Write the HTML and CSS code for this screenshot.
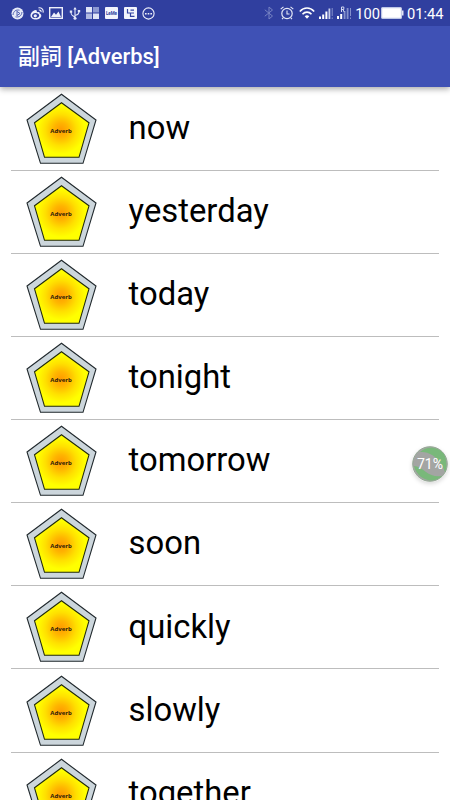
FILE: index.html
```html
<!DOCTYPE html>
<html lang="zh-Hant">
<head>
<meta charset="utf-8">
<title>副詞 [Adverbs]</title>
<link rel="stylesheet" href="styles.css">
</head>
<body>
<svg class="defs" width="0" height="0" aria-hidden="true">
  <defs>
    <radialGradient id="glow" gradientUnits="userSpaceOnUse" cx="36" cy="38" r="24">
      <stop offset="0" stop-color="#ff9a00"/>
      <stop offset=".3" stop-color="#ffb400"/>
      <stop offset=".65" stop-color="#ffe000"/>
      <stop offset="1" stop-color="#ffff00"/>
    </radialGradient>
    <symbol id="badge" viewBox="0 0 72 74">
      <path d="M36.5 2.3 71 28 58 71.3H15.5L2 28Z" fill="#ccd6dc" stroke="#20282c" stroke-width="1.1"/>
      <path d="M36.5 10.8 64 30.8 54 65.3H19.5L9.5 30.8Z" fill="url(#glow)" stroke="#20280c" stroke-width="1.1"/>
    </symbol>
  </defs>
</svg>
<div class="screen">
  <header class="top">
    <div class="status">
      <div class="group left">
        <svg width="13" height="13" viewBox="0 0 13 13"><circle cx="6.5" cy="6.5" r="6" fill="#e6eaf8"/><path d="M2 8C2.500 4 5 2.500 8.500 3.200M11 5C10.500 9 8 10.500 4.500 9.800M6 4V9M6 4.500 9 6.500 6 8.500" fill="none" stroke="#5362b2" stroke-width="1"/></svg>
        <svg width="14" height="13" viewBox="0 0 14 13"><path fill-rule="evenodd" d="M5.500 3C3 3.500.5 6 .5 8.500c0 2.500 2.500 4 5.200 4 3 0 5.600-1.700 5.600-3.800 0-1.200-.8-1.900-1.700-2.200.4-1.500-.8-2-2.800-1.200C7.200 3.800 6.800 3 5.500 3ZM5.500 6c2.200 0 3.700 1 3.700 2.500S7.700 11.100 5.500 11.100 2 10.200 2 8.700 3.500 6 5.500 6Z" fill="#eef0fa"/><circle cx="5.300" cy="8.800" r="1.600" fill="#eef0fa"/><path d="M8.500.9C11.500.3 13.800 2.700 13 5.600M8.800 3C10.300 2.700 11.400 3.900 11 5.200" fill="none" stroke="#eef0fa" stroke-width="1.100"/></svg>
        <svg width="14" height="12" viewBox="0 0 14 12"><rect x=".7" y=".7" width="12.600" height="10.600" fill="none" stroke="#eef0fa" stroke-width="1.400"/><path d="M2 10 5 5.500 7 7.700 9.500 4.500 12 10Z" fill="#eef0fa"/></svg>
        <svg width="12" height="13" viewBox="0 0 12 13"><path d="M6 1V11M6 10C3 9 2 8 2 4.500M6 8.500C9 7.500 10 7 10 4" fill="none" stroke="#e3e7f7" stroke-width="1.100"/><path d="M4.300 2.500 6 0 7.700 2.500ZM.8 3.500H3.200V5.700H.8ZM8.800 3H11.200V5.200H8.800Z" fill="#e3e7f7"/><circle cx="6" cy="11.200" r="1.500" fill="#e3e7f7"/></svg>
        <svg width="13" height="12" viewBox="0 0 13 12"><path d="M0 0H6V5.500H0ZM7 6.500H13V12H7Z" fill="#e0e5f6"/><path d="M7 0H13V5.500H7Z" fill="#8c99d2"/><path d="M0 6.500H6V12H0Z" fill="#b1bae2"/></svg>
        <svg width="13" height="12" viewBox="0 0 13 12"><rect width="13" height="12" rx="1" fill="#f2f4fc"/><text class="lemo" x="6.500" y="7.900" text-anchor="middle" textLength="11">LeMe</text></svg>
        <svg width="13" height="12" viewBox="0 0 13 12"><rect width="13" height="12" rx="1" fill="#f2f4fc"/><path d="M3.500 2V6H10M6.500 6V9.400H10.500M6.500 3.200H10" fill="none" stroke="#3344a2" stroke-width="1.200"/></svg>
        <svg width="13" height="13" viewBox="0 0 13 13"><circle cx="6.500" cy="6.500" r="5.600" fill="none" stroke="#eef0fa" stroke-width="1.100"/><path d="M3 6H4.600V7.500H3ZM5.700 6H7.300V7.500H5.700ZM8.400 6H10V7.500H8.400Z" fill="#eef0fa"/></svg>
      </div>
      <div class="group right">
        <svg width="10" height="14" viewBox="0 0 10 14"><path d="M.8 3.800 8.500 10 5 13V1L8.500 4 .8 10.200" fill="none" stroke="#7783c3" stroke-width="1"/></svg>
        <svg class="alarm" width="14" height="14" viewBox="0 0 14 14"><circle cx="7" cy="7.500" r="5.200" fill="none" stroke="#e6e9f7" stroke-width="1.200"/><path d="M.7 3.200 3.500.8M13.300 3.200 10.500.8M7 4.500V8H9.500M3.200 11.800 2 13.200M10.800 11.800 12 13.200" fill="none" stroke="#e6e9f7" stroke-width="1.100"/></svg>
        <svg class="wifi" width="16" height="12" viewBox="0 0 16 12"><path d="M.8 4.500C5-.1 11-.1 15.200 4.500M3.500 7.200C6 4.400 10 4.400 12.500 7.200" fill="none" stroke="#fff" stroke-width="1.600"/><path d="M5.700 9.200Q8 7.400 10.300 9.200L8 11.700Z" fill="#fff"/></svg>
        <svg class="signal" width="14" height="13" viewBox="0 0 14 13"><path d="M0 9.500H2V12H0ZM3.200 7.500H5.200V12H3.200ZM6.400 4.500H8.400V12H6.400Z" fill="#fff"/><path d="M9.500 1.500H11.300V12H9.500Z" fill="#c8cfed"/><path d="M12.700 1H13.700V9H12.700ZM12.700 10.500H13.700V12H12.700Z" fill="#8490cb"/></svg>
        <svg class="signal" width="15" height="14" viewBox="0 0 15 14"><path d="M0 10H2V13H0ZM3.200 8H5.200V13H3.200Z" fill="#fff"/><path d="M6.700 5H8.500V13H6.700ZM9.700 2H11.500V13H9.700ZM13 2H14V10H13ZM13 11.500H14V13H13Z" fill="#8490cb"/><path d="M4.500 6V1H6.800V3.500H4.500M6 3.500 7.200 6" fill="none" stroke="#d2d8f0"/></svg>
        <span class="level">100</span>
        <svg class="battery" width="23" height="12" viewBox="0 0 23 12"><rect x=".6" y=".6" width="19.800" height="10.800" rx="1" fill="#fff" stroke="#bec7e5" stroke-width="1.200"/><path d="M21 3.500H22.500V8.500H21Z" fill="#dfe4f5"/></svg>
        <span class="clock">01:44</span>
      </div>
    </div>
    <h1 class="title">副詞 [Adverbs]</h1>
  </header>
  <main>
    <ul class="list">
      <li class="row"><svg class="badge" viewBox="0 0 72 74"><use href="#badge"/><text x="36" y="41">Adverb</text></svg><span class="word">now</span></li>
      <li class="row"><svg class="badge" viewBox="0 0 72 74"><use href="#badge"/><text x="36" y="41">Adverb</text></svg><span class="word">yesterday</span></li>
      <li class="row"><svg class="badge" viewBox="0 0 72 74"><use href="#badge"/><text x="36" y="41">Adverb</text></svg><span class="word">today</span></li>
      <li class="row"><svg class="badge" viewBox="0 0 72 74"><use href="#badge"/><text x="36" y="41">Adverb</text></svg><span class="word">tonight</span></li>
      <li class="row"><svg class="badge" viewBox="0 0 72 74"><use href="#badge"/><text x="36" y="41">Adverb</text></svg><span class="word">tomorrow</span></li>
      <li class="row"><svg class="badge" viewBox="0 0 72 74"><use href="#badge"/><text x="36" y="41">Adverb</text></svg><span class="word">soon</span></li>
      <li class="row"><svg class="badge" viewBox="0 0 72 74"><use href="#badge"/><text x="36" y="41">Adverb</text></svg><span class="word">quickly</span></li>
      <li class="row"><svg class="badge" viewBox="0 0 72 74"><use href="#badge"/><text x="36" y="41">Adverb</text></svg><span class="word">slowly</span></li>
      <li class="row"><svg class="badge" viewBox="0 0 72 74"><use href="#badge"/><text x="36" y="41">Adverb</text></svg><span class="word">together</span></li>
    </ul>
  </main>
  <div class="bubble">
    <svg width="36" height="36" viewBox="0 0 36 36"><circle cx="18" cy="18" r="17.300" fill="#a3a5a3" stroke="#94a894"/><path d="M8 6C15-1 27 1 32 8 35 14 35 22 33 26 30 18 25 11 18 8 14 6 11 6 8 6ZM2 20C4 29 12 34.500 20 34.500 25 34 28 32 30 30 23 31 18 29 14 26 10 23 6 20 2 20Z" fill="#79b87a"/></svg>
    <span class="percent">71%</span>
  </div>
</div>
</body>
</html>
```
FILE: styles.css
```css
* {
  box-sizing: border-box;
}

body {
  margin: 0;
  background: #fff;
  font-family: Roboto, "Noto Sans CJK TC", sans-serif;
}

svg {
  display: block;
  flex: none;
}

.defs {
  position: absolute;
}

.screen {
  position: relative;
  height: 800px;
  overflow: hidden;
}

.top {
  position: relative;
  height: 87px;
  background: #3f51b5;
  box-shadow: 0 2px 6px rgba(0, 0, 0, .35);
}

.status {
  display: flex;
  justify-content: space-between;
  height: 26px;
  padding: 0 6.5px 0 11px;
  background: #303f9f;
  color: #fff;
}

.group {
  display: flex;
  align-items: center;
}

.left {
  gap: 5.6px;
}

.alarm {
  margin-left: 5.5px;
}

.wifi {
  margin-left: 5.5px;
}

.signal {
  margin-left: 4px;
}

.level,
.clock {
  font-size: 14.7px;
  line-height: 26px;
  padding-top: 1px;
}

.level {
  margin-left: 3px;
}

.battery {
  margin-left: 1px;
}

.clock {
  margin-left: 3px;
}

.lemo {
  font: bold 4.5px Roboto, sans-serif;
  fill: #303f9f;
}

.title {
  margin: 0;
  padding-left: 18px;
  color: #fff;
  font-size: 21.9px;
  font-weight: 500;
  line-height: 62px;
}

.list {
  margin: 0 11px;
  padding: 0.5px 0 0;
  list-style: none;
}

.row {
  display: flex;
  align-items: center;
  height: 83.15px;
  padding-left: 14px;
  border-bottom: 1px solid #bdbdbd;
}

.badge {
  width: 72px;
  height: 74px;
}

.badge text {
  font: bold 6px "Open Sans", sans-serif;
  text-anchor: middle;
  fill: #30200a;
}

.word {
  margin-left: 31.6px;
  margin-bottom: 1.6px;
  color: #000;
  font-size: 32.8px;
  line-height: 80px;
}

.bubble {
  position: absolute;
  top: 446px;
  right: 2px;
  width: 36px;
  height: 36px;
  border-radius: 50%;
  box-shadow: 0 2px 4px rgba(0, 0, 0, .15);
}

.percent {
  position: absolute;
  inset: 0;
  color: #fff;
  font-size: 14px;
  line-height: 37px;
  text-align: center;
}
```
